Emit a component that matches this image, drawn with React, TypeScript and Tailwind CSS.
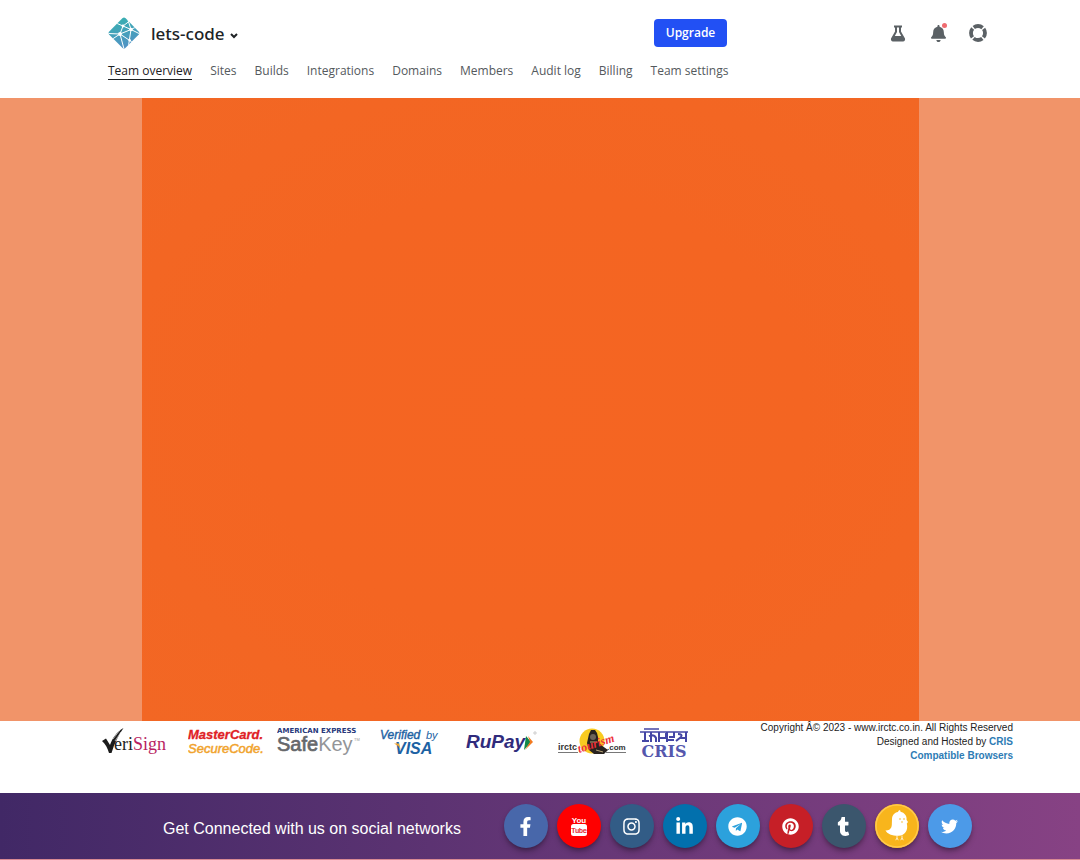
import React from "react";
import { FaFlask, FaBell, FaFacebookF, FaInstagram, FaLinkedinIn, FaTelegram, FaPinterest, FaTumblr, FaTwitter } from "react-icons/fa";

const tabs = ["Team overview", "Sites", "Builds", "Integrations", "Domains", "Members", "Audit log", "Billing", "Team settings"];

function TeamLogo() {
  return (
    <svg viewBox="0 0 32 32" className="size-8" aria-hidden="true">
      <defs>
        <linearGradient id="team" x1="0" y1="0" x2="0.3" y2="1">
          <stop offset="0" stopColor="#35b3ae" />
          <stop offset="1" stopColor="#5093c4" />
        </linearGradient>
        <clipPath id="diamond">
          <path d="M14.6 1.1Q16 0 17.4 1.1L30.8 14.7Q32 16 30.8 17.4L17.4 30.9Q16 32 14.6 30.9L1 17.4Q0 16 1 14.7Z" />
        </clipPath>
      </defs>
      <g clipPath="url(#diamond)">
        <rect width="32" height="32" fill="url(#team)" />
        <g stroke="#fff" strokeWidth="1" fill="none">
          <path d="M0 16.5L12 17L23 12.5L32 17M12 17L15 9L23 12.5L19 0M15 9L8 6M15 9L23 3M12 17L16 32M12 17L3 23M12 17L24 25M23 12.5L20 32M23 12.5L30 9" />
        </g>
        <g fill="#fff">
          <circle cx="12" cy="17" r="1.9" />
          <circle cx="23" cy="12.5" r="1.8" />
          <circle cx="15" cy="9" r="1.4" />
          <circle cx="21.7" cy="23.2" r="1.2" />
        </g>
      </g>
    </svg>
  );
}

function LifeRing() {
  return (
    <svg viewBox="0 0 18 18" className="size-[18px]" aria-hidden="true">
      <circle cx="9" cy="9" r="7" fill="none" stroke="currentColor" strokeWidth="3.8" strokeDasharray="9.5 1.5" strokeDashoffset="4.75" />
    </svg>
  );
}

function Flask() {
  return (
    <svg viewBox="0 0 16 17" className="h-[17px] w-4" aria-hidden="true">
      <path fillRule="evenodd" fill="currentColor" d="M4 .5H12V2.500H11V6.500L15 13.500Q15.500 16 13 16.500H3Q.5 16 1 13.500L5 6.500V2.500H4ZM7 2.500V7L4.800 11H11.200L9 7V2.500Z" />
    </svg>
  );
}

function YouTubeMark() {
  return (
    <svg viewBox="0 0 18 22" className="h-[22px] w-[18px]" aria-hidden="true">
      <text x="9" y="8" textAnchor="middle" fontSize="8" fontWeight="700" fill="#fff" className="font-['Liberation_Sans',sans-serif]">You</text>
      <rect x="1" y="9" width="16" height="12" rx="2.5" fill="#fff" />
      <text x="9" y="18" textAnchor="middle" fontSize="7" fill="#e50914" stroke="#e50914" strokeWidth=".2" className="font-['Liberation_Sans',sans-serif]">Tube</text>
    </svg>
  );
}

function BirdMark() {
  return (
    <svg viewBox="0 0 44 44" className="size-11" aria-hidden="true">
      <circle cx="22" cy="22" r="21" fill="none" stroke="#ffc94a" strokeWidth="1.5" />
      <path d="M23 8C23.500 6 25.500 5.500 25.500 7.800C29.500 8.700 32 12 31.600 16L33 18L31.800 19.500C33.500 26 30 31.800 23.500 31.800C17 31.800 12 30 10.500 26.300C13.500 26.800 16.500 25.200 16.800 21L17 15C17.200 11 19.500 8.500 23 8Z" fill="#fff" />
      <path d="M22 31.500V35.500M20.500 35.800L22 34.500L23.500 35.800M27 31.500V35.500M25.500 35.800L27 34.500L28.500 35.800" stroke="#fff" strokeWidth=".8" fill="none" />
      <circle cx="25" cy="15" r=".8" fill="#f5b51b" />
      <circle cx="29" cy="15" r=".8" fill="#f5b51b" />
      <path d="M26 17.500L28 17.500L27 19.200Z" fill="#f5b51b" />
    </svg>
  );
}

const socials = [
  { name: "Facebook", bg: "bg-[#4867aa]", icon: <FaFacebookF className="size-[19px]" /> },
  { name: "YouTube", bg: "bg-[#fe0000]", icon: <YouTubeMark /> },
  { name: "Instagram", bg: "bg-[#325c86]", icon: <FaInstagram className="size-[19px]" /> },
  { name: "LinkedIn", bg: "bg-[#0270ad]", icon: <FaLinkedinIn className="size-[19px]" /> },
  { name: "Telegram", bg: "bg-[#2ca1dc]", icon: <FaTelegram className="size-[19px]" /> },
  { name: "Pinterest", bg: "bg-[#c61f27]", icon: <FaPinterest className="size-[17px]" /> },
  { name: "Tumblr", bg: "bg-[#3b566d]", icon: <FaTumblr className="size-[19px]" /> },
  { name: "Koo", bg: "bg-[#f8b51c]", icon: <BirdMark /> },
  { name: "Twitter", bg: "bg-[#4c9ae8]", icon: <FaTwitter className="size-[17px]" /> },
];

function PartnerLogos() {
  return (
    <div className="flex items-center gap-3.5 font-['Liberation_Sans',Arial,sans-serif]">
      <svg viewBox="0 0 72 36" className="h-9 w-[72px]" role="img" aria-label="VeriSign">
        <path d="M0 16L4 13.500L8 20C10.500 13 14.500 7 21.500 3C16.500 10 12.500 18 9.500 28L7 28C5.500 23 3.500 19 0 16Z" fill="#1c1c1c" />
        <path d="M11 14L18 5M13 16L19 7" stroke="#fff" strokeWidth=".6" />
        <text x="12" y="25" fontSize="18" fill="#222" className="font-['Liberation_Serif',serif]">eri<tspan fill="#b81e62">Sign</tspan></text>
      </svg>
      <svg viewBox="0 0 75 36" className="h-9 w-[75px]" role="img" aria-label="MasterCard SecureCode">
        <g fontStyle="italic" fontSize="13" className="font-['Liberation_Sans',sans-serif]">
          <text x="0" y="14" fontWeight="700" fill="#e01f26" stroke="#e01f26" strokeWidth=".3">MasterCard.</text>
          <text x="0" y="28" fill="#f1a32c" stroke="#f1a32c" strokeWidth=".5">SecureCode.</text>
        </g>
      </svg>
      <svg viewBox="0 0 88 36" className="h-9 w-[88px]" role="img" aria-label="American Express SafeKey">
        <text x="0" y="8" fontSize="7" fontWeight="700" fill="#27377a" className="font-['DejaVu_Sans',sans-serif]">AMERICAN EXPRESS</text>
        <text x="0" y="26" fontSize="20" fill="#66686b" stroke="#66686b" strokeWidth=".7">Safe<tspan fill="#939598" stroke="none">Key</tspan></text>
        <text x="77" y="16" fontSize="4" fill="#999">TM</text>
      </svg>
      <svg viewBox="0 0 73 36" className="h-9 w-[73px]" role="img" aria-label="Verified by Visa">
        <g fontStyle="italic" fill="#1d62a3">
          <text x="1" y="14" fontSize="12" stroke="#1d62a3" strokeWidth=".4">Verified</text>
          <text x="47" y="14" fontSize="11">by</text>
          <text x="16" y="29" fontSize="16" fontWeight="700">VISA</text>
        </g>
        <path d="M15 18.500H20L21.500 24Q19 20 15 18.500Z" fill="#f2a52b" />
      </svg>
      <svg viewBox="0 0 78 36" className="h-9 w-[78px]" role="img" aria-label="RuPay">
        <text x="0" y="23" fontSize="19" fontWeight="700" fontStyle="italic" fill="#302b7c">RuPay</text>
        <path d="M60 11L65 17L58 25Z" fill="#128849" />
        <path d="M62 11L67 17L59 25L64 17Z" fill="#f37a20" />
        <circle cx="69" cy="8" r="1.2" fill="none" stroke="#aaa" strokeWidth=".6" />
      </svg>
      <svg viewBox="0 0 68 36" className="h-9 w-[68px]" role="img" aria-label="irctc tourism .com">
        <circle cx="34" cy="16" r="12.5" fill="#f9cb21" />
        <path d="M31 9L33 5H37L39 8L40 12V16L43 20L50 25L46 29H36L31 25L29 18Z" fill="#29231f" />
        <circle cx="35" cy="12" r="3" fill="#6d6359" />
        <path d="M32 17H39M38 25L45 27" stroke="#baa779" strokeWidth="1" />
        <text x="0" y="25" fontSize="9" fontWeight="700" fill="#333">irctc</text>
        <path d="M0 27.500H20M48 27.500H68" stroke="#555" strokeWidth=".8" />
        <text x="21" y="28" fontSize="12" fontStyle="italic" fontWeight="700" fill="#ee2f3a" transform="rotate(-18 21 28)" className="font-['Liberation_Serif',serif]">tourism</text>
        <text x="49" y="25" fontSize="8" fontWeight="700" fill="#333">.com</text>
      </svg>
      <svg viewBox="0 0 48 36" className="h-9 w-12" role="img" aria-label="CRIS">
        <path d="M4 4H19M0 7H48" stroke="#4446a5" strokeWidth="1.6" />
        <path d="M5 7V17M2 16H9M11 7V17M9 11Q14 9 16 13V17M19 7V17M19 13H26V8M27 7V17M27 15H34M34 7V12H29M38 9Q43 9 41 12L36 16M40 13H46M46 7V17" fill="none" stroke="#4446a5" strokeWidth="2" />
        <text x="24" y="32" textAnchor="middle" fontSize="16" fontWeight="700" fill="#5557ad" className="font-['DejaVu_Serif',serif]">CRIS</text>
      </svg>
    </div>
  );
}

export default function App() {
  return (
    <div className="flex min-h-screen flex-col bg-white">
      <header className="pt-4 pr-[93px] pb-[18px] pl-[108px] font-['Open_Sans','Noto_Sans',sans-serif]">
        <div className="flex h-[34px] items-center">
          <button className="flex items-center gap-[11px] text-[17px] text-[#202326]">
            <TeamLogo />
            <span className="flex items-center gap-[5px] pt-0.5 font-['Noto_Sans',sans-serif] font-medium">
              lets-code
              <svg viewBox="0 0 8 6" className="mt-1 h-1.5 w-2" aria-hidden="true">
                <path d="M1 1L4 4L7 1" fill="none" stroke="currentColor" strokeWidth="2" />
              </svg>
            </span>
          </button>
          <div className="ml-auto flex items-center">
            <button className="mr-[162px] h-7 w-[73px] rounded-[4px] bg-[#2250f4] text-xs font-semibold text-white">Upgrade</button>
            <div className="flex items-center gap-[22px] text-[#5b6165]">
              <button aria-label="Labs" className="flex size-[18px] items-center justify-center"><Flask /></button>
              <button aria-label="Notifications" className="relative flex size-[18px] items-center justify-center">
                <FaBell className="size-[17px]" />
                <span className="absolute -top-px right-0 size-[5px] rounded-full bg-[#ef6b70]" />
              </button>
              <button aria-label="Help" className="size-[18px]"><LifeRing /></button>
            </div>
          </div>
        </div>
        <nav className="mt-[13px] flex gap-[18px] text-xs leading-4 whitespace-nowrap text-[#54595d]">
          {tabs.map((t, i) => (
            <a key={t} href="#" className={i === 0 ? "border-b border-[#1d2022] text-[#1d2022]" : ""}>{t}</a>
          ))}
        </nav>
      </header>

      <main className="flex min-h-96 flex-1 bg-[#f19469]">
        <div className="ml-[13.15%] w-[71.94%] bg-radial from-[#f56522] via-[#f46522] to-[#f26724]" />
      </main>

      <footer className="font-['Liberation_Sans',Arial,sans-serif]">
        <div className="flex h-[72px] items-start justify-between pr-[67px] pl-[102px]">
          <div className="pt-1"><PartnerLogos /></div>
          <div className="text-right text-[10px] leading-[14px] whitespace-nowrap text-[#222]">
            <p>Copyright Â© 2023 - www.irctc.co.in. All Rights Reserved</p>
            <p>Designed and Hosted by <a href="#" className="font-bold text-[#2e7cb5]">CRIS</a></p>
            <p><a href="#" className="font-bold text-[#2e7cb5]">Compatible Browsers</a></p>
          </div>
        </div>
        <div className="flex h-[67px] items-center gap-[43px] border-b border-[#d98a94] bg-linear-to-r from-[#412866] to-[#874284] pl-[163px]">
          <p className="pt-1.5 text-base whitespace-nowrap text-white">Get Connected with us on social networks</p>
          <div className="flex gap-[9px]">
            {socials.map((s) => (
              <a key={s.name} href="#" aria-label={s.name} className={"flex size-11 items-center justify-center rounded-full text-white shadow-md shadow-black/30 " + s.bg}>{s.icon}</a>
            ))}
          </div>
        </div>
      </footer>
    </div>
  );
}
